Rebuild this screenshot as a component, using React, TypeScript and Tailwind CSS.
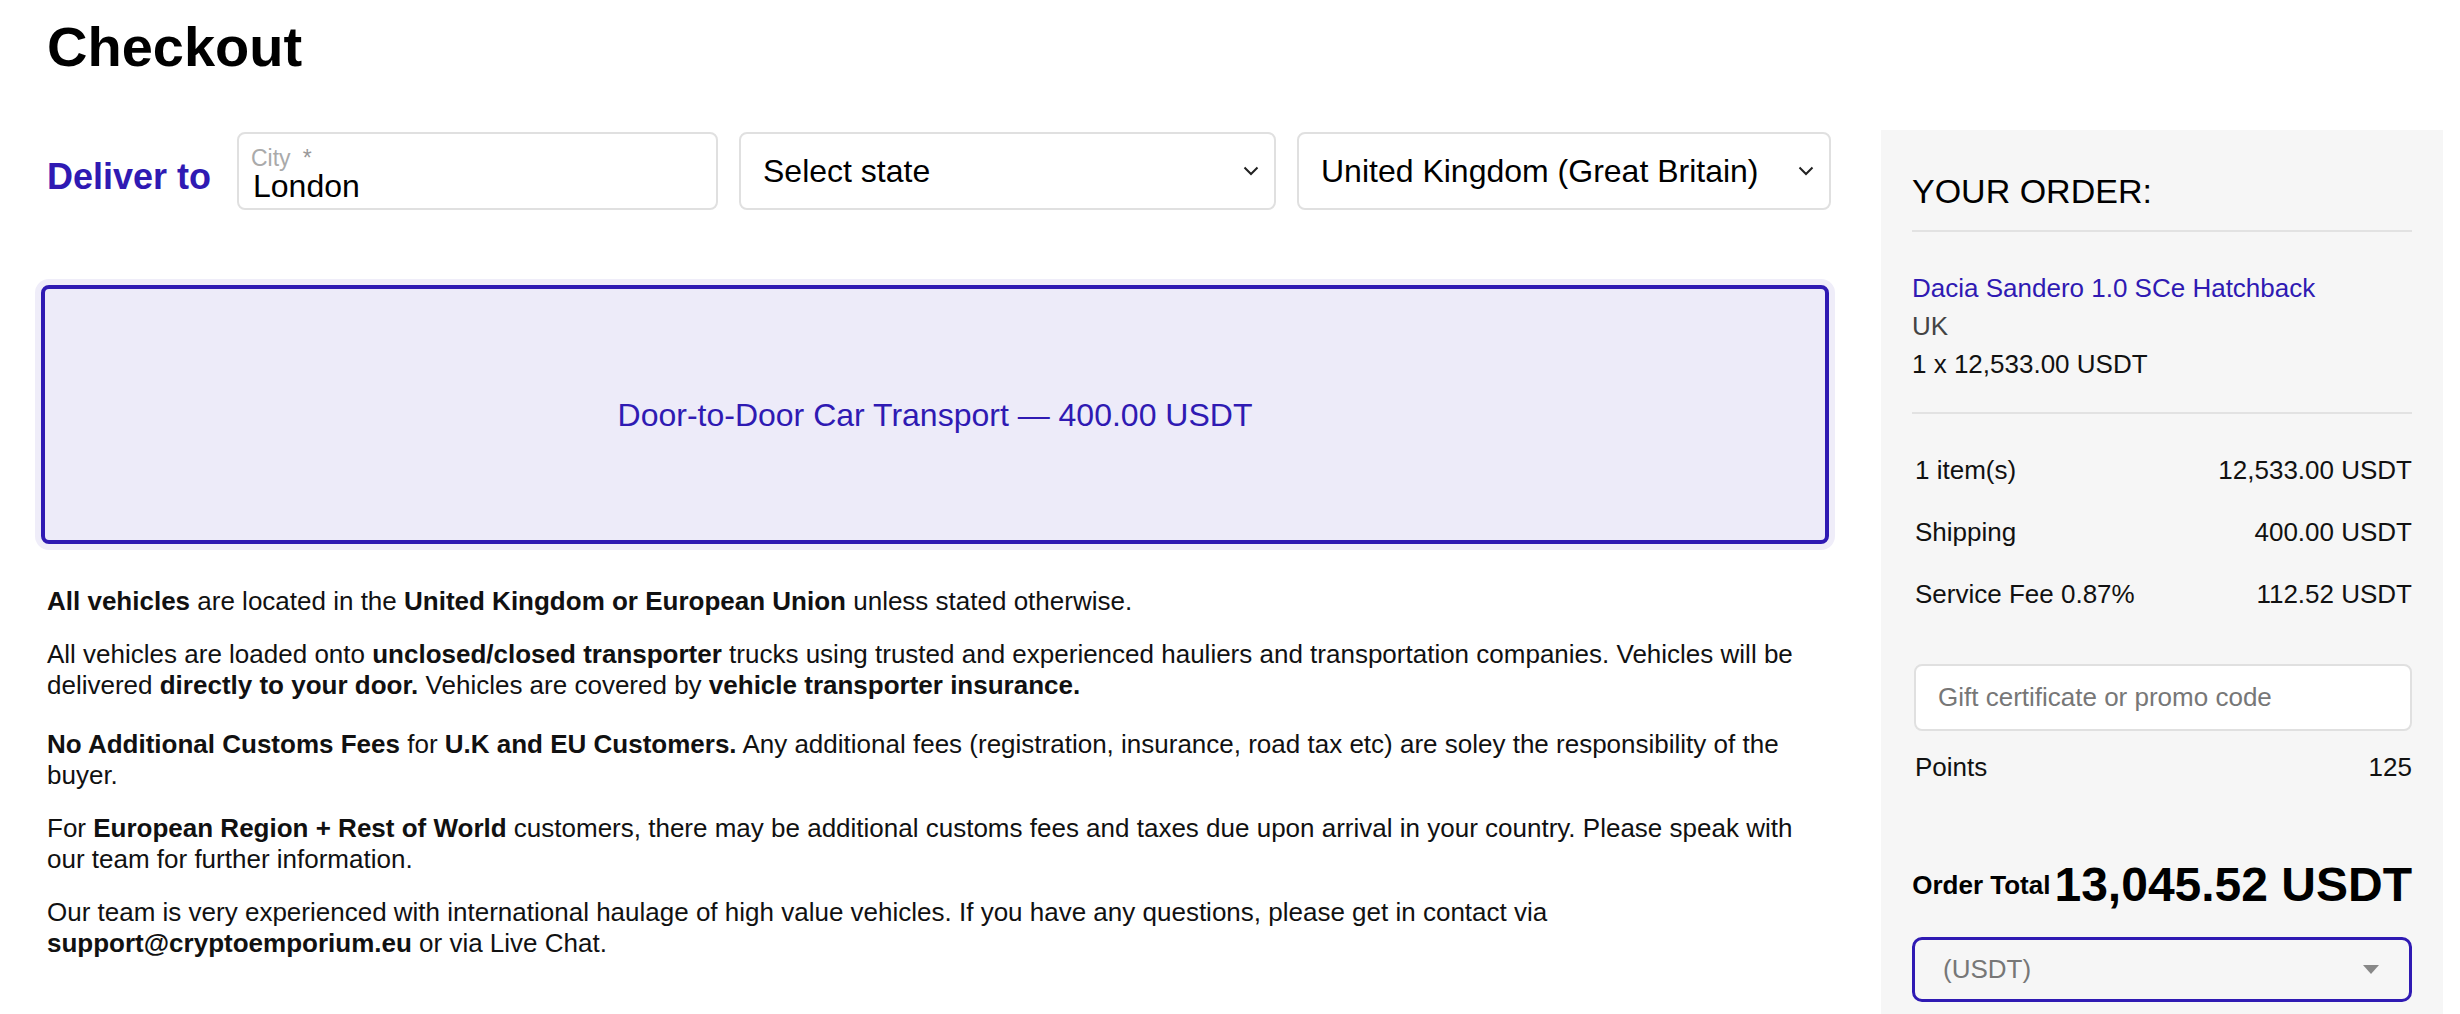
import React from 'react';

const BLUE = 'text-[#2f1ab3]';

function Chevron() {
  return (
    <svg width="16" height="10" viewBox="0 0 16 10" className="shrink-0">
      <polyline points="1.5,1.5 8,8 14.5,1.5" fill="none" stroke="#222" strokeWidth="2" />
    </svg>
  );
}

function FakeSelect({ label, className }: { label: string; className: string }) {
  return (
    <div
      className={`h-[78px] flex items-center justify-between bg-white border-2 border-[#e0e0e0] rounded-[8px] pl-[22px] pr-[15px] ${className}`}
    >
      <span className="text-[32px] leading-[36px] text-black">{label}</span>
      <Chevron />
    </div>
  );
}

function SummaryRow({ label, value }: { label: string; value: string }) {
  return (
    <div className="h-[62px] flex items-center justify-between pl-[3px] text-[26px] text-[#111]">
      <span>{label}</span>
      <span>{value}</span>
    </div>
  );
}

export default function App() {
  return (
    <div className="min-h-screen bg-white font-['Liberation_Sans',Arial,sans-serif] text-black pl-[47px] pr-[17px] pt-[15px]">
      <h1 className="text-[56px] leading-[64px] font-bold mb-[51px]">Checkout</h1>

      <div className="flex gap-[50px]">
        {/* left column */}
        <div className="w-[1784px]">
          <div className="flex items-center mt-[2px]">
            <span className={`text-[36px] leading-[40px] font-bold ${BLUE} mt-[12px] w-[190px] shrink-0`}>
              Deliver to
            </span>
            <div className="w-[481px] h-[78px] bg-white border-2 border-[#e0e0e0] rounded-[8px] pl-[12px] pt-[12px] flex flex-col">
              <span className="text-[23px] leading-[24px] text-[#aaa]">
                City<span className="ml-[12px] text-[#999]">*</span>
              </span>
              <span className="text-[32px] leading-[32px] text-black pl-[2px]">London</span>
            </div>
            <FakeSelect label="Select state" className="w-[537px] ml-[21px]" />
            <FakeSelect label="United Kingdom (Great Britain)" className="w-[534px] ml-[21px]" />
          </div>

          <div className="mt-[75px] -ml-[6px] mr-[2px] h-[259px] rounded-[8px] border-4 border-[#2f1ab3] bg-[#edebf9] shadow-[0_0_0_6px_#efedf9] flex items-center justify-center">
            <span className={`text-[32px] ${BLUE}`}>Door-to-Door Car Transport — 400.00 USDT</span>
          </div>

          <div className="mt-[42px] text-[26px] leading-[31px] text-[#111]">
            <p className="mb-[22px]">
              <b>All vehicles</b> are located in the <b>United Kingdom or European Union</b> unless stated otherwise.
            </p>
            <p className="mb-[28px]">
              All vehicles are loaded onto <b>unclosed/closed transporter</b> trucks using trusted and experienced
              hauliers and transportation companies. Vehicles will be delivered <b>directly to your door.</b> Vehicles
              are covered by <b>vehicle transporter insurance.</b>
            </p>
            <p className="mb-[22px]">
              <b>No Additional Customs Fees</b> for <b>U.K and EU Customers.</b> Any additional fees (registration,
              insurance, road tax etc) are soley the responsibility of the buyer.
            </p>
            <p className="mb-[22px]">
              For <b>European Region + Rest of World</b> customers, there may be additional customs fees and taxes due
              upon arrival in your country. Please speak with our team for further information.
            </p>
            <p>
              Our team is very experienced with international haulage of high value vehicles. If you have any
              questions, please get in contact via <b>support@cryptoemporium.eu</b> or via Live Chat.
            </p>
          </div>
        </div>

        {/* order summary */}
        <aside className="w-[562px] shrink-0 min-h-[884px] bg-[#f6f6f6] px-[31px] pt-[41px] pb-[20px]">
          <h2 className="text-[34px] leading-[40px] text-black">YOUR ORDER:</h2>
          <div className="mt-[19px] border-t-2 border-[#e2e2e2]" />
          <div className="pt-[37px] text-[26px] leading-[38px]">
            <div className={BLUE}>Dacia Sandero 1.0 SCe Hatchback</div>
            <div className="text-[#444]">UK</div>
            <div className="text-[#111]">1 x 12,533.00 USDT</div>
          </div>
          <div className="mt-[29px] border-t-2 border-[#e2e2e2]" />

          <div className="mt-[25px]">
            <SummaryRow label="1 item(s)" value="12,533.00 USDT" />
            <SummaryRow label="Shipping" value="400.00 USDT" />
            <SummaryRow label="Service Fee 0.87%" value="112.52 USDT" />
          </div>

          <div className="mt-[39px] ml-[2px] h-[67px] bg-white border-2 border-[#e0e0e0] rounded-[8px] flex items-center pl-[22px]">
            <span className="text-[26px] text-[#777]">Gift certificate or promo code</span>
          </div>

          <div className="mt-[16px] h-[40px] flex items-center justify-between pl-[3px] text-[26px] text-[#111]">
            <span>Points</span>
            <span>125</span>
          </div>

          <div className="mt-[70px] h-[56px] flex items-center justify-end gap-[4px] font-bold text-black whitespace-nowrap">
            <span className="text-[26px] shrink-0">Order Total</span>
            <span className="text-[48px] leading-[56px] shrink-0">13,045.52 USDT</span>
          </div>

          <div className="mt-[24px] h-[65px] border-[3px] border-[#2f1ab3] rounded-[10px] flex items-center justify-between pl-[28px] pr-[30px]">
            <span className="text-[26px] text-[#777]">(USDT)</span>
            <svg width="16" height="9" viewBox="0 0 16 9">
              <polygon points="0,0 16,0 8,9" fill="#888" />
            </svg>
          </div>
        </aside>
      </div>
    </div>
  );
}
